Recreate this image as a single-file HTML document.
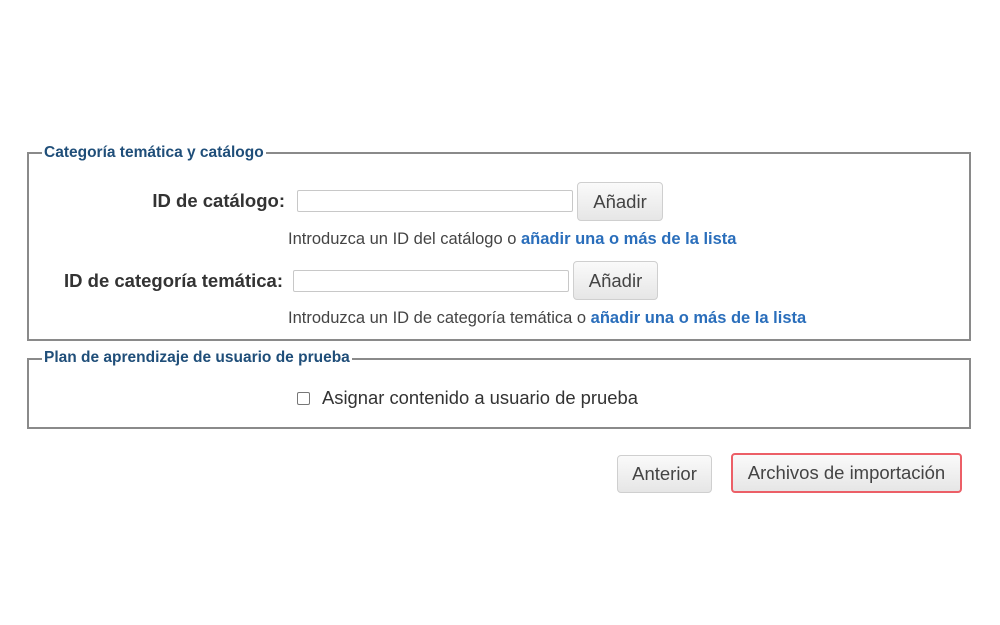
<!DOCTYPE html>
<html><head><meta charset="utf-8"><style>
body{margin:0;width:1000px;height:625px;background:#fff;font-family:"Liberation Sans",Arial,sans-serif;position:relative;overflow:hidden}
.box{position:absolute;border:2px solid #8a8a8a;box-sizing:border-box}
.leg{position:absolute;background:#fff;color:#1f4e79;font-size:15.5px;font-weight:bold;padding:0 2px;line-height:16px}
.a{position:absolute;white-space:nowrap}
.lbl{font-weight:bold;font-size:18.5px;color:#333;text-align:right}
.inp{border:1px solid #c8c8c8;height:22px;box-sizing:border-box;background:#fff;border-radius:2px}
.btn{border:1px solid #cfcfcf;border-radius:4px;background:linear-gradient(#fafafa,#e6e6e6);color:#444;font-size:18.5px;text-align:center;box-sizing:border-box}
.hint{font-size:16.5px;color:#444}
.hint b{color:#2a6ebb}
</style></head><body>
<div class="box" style="left:27px;top:152px;width:944px;height:189px"></div>
<div class="leg" style="left:42px;top:145px">Categoría temática y catálogo</div>
<div class="a lbl" style="left:60px;top:190px;width:225px">ID de catálogo:</div>
<div class="a inp" style="left:297px;top:190px;width:276px"></div>
<div class="a btn" style="left:577px;top:182px;width:86px;height:39px;line-height:37px">Añadir</div>
<div class="a hint" style="left:288px;top:230px">Introduzca un ID del catálogo o <b>añadir una o más de la lista</b></div>
<div class="a lbl" style="left:40px;top:270px;width:243px">ID de categoría temática:</div>
<div class="a inp" style="left:293px;top:270px;width:276px"></div>
<div class="a btn" style="left:573px;top:261px;width:85px;height:39px;line-height:37px">Añadir</div>
<div class="a hint" style="left:288px;top:309px">Introduzca un ID de categoría temática o <b>añadir una o más de la lista</b></div>

<div class="box" style="left:27px;top:358px;width:944px;height:71px"></div>
<div class="leg" style="left:42px;top:350px">Plan de aprendizaje de usuario de prueba</div>
<div class="a" style="left:297px;top:392px;width:13px;height:13px;border:1px solid #777;box-sizing:border-box;border-radius:2px"></div>
<div class="a" style="left:322px;top:387px;font-size:18.4px;color:#333">Asignar contenido a usuario de prueba</div>

<div class="a btn" style="left:617px;top:455px;width:95px;height:38px;line-height:36px">Anterior</div>
<div class="a btn" style="left:731px;top:453px;width:231px;height:40px;line-height:36px;border:2px solid #ec5f67">Archivos de importación</div>
</body></html>
